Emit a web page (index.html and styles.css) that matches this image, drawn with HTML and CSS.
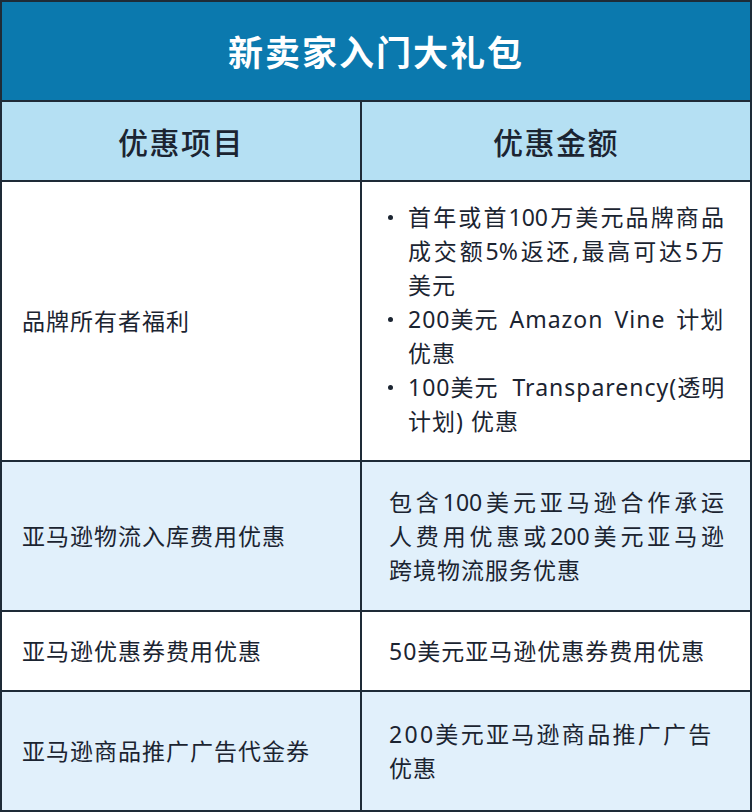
FILE: index.html
```html
<!DOCTYPE html>
<html lang="zh-CN">
<head>
<meta charset="utf-8">
<title>新卖家入门大礼包</title>
<link rel="stylesheet" href="styles.css">
</head>
<body>
<div class="card">
  <div class="title">新卖家入门大礼包</div>
  <div class="th">优惠项目</div>
  <div class="th">优惠金额</div>

  <div class="td left white">品牌所有者福利</div>
  <div class="td right white lift">
    <ul class="bullets">
      <li><span class="jl">首年或首100万美元品牌商品</span><span class="jl">成交额5%返还,最高可达5万</span><span class="ln">美元</span></li>
      <li><span class="ln spaced">200美元 Amazon Vine 计划</span><span class="ln">优惠</span></li>
      <li><span class="ln spaced2">100美元 Transparency(透明</span><span class="ln">计划) 优惠</span></li>
    </ul>
  </div>

  <div class="td left blue">亚马逊物流入库费用优惠</div>
  <div class="td right blue">
    <p class="para"><span class="jl">包含100美元亚马逊合作承运</span><span class="jl">人费用优惠或200美元亚马逊</span><span class="ln">跨境物流服务优惠</span></p>
  </div>

  <div class="td left white">亚马逊优惠券费用优惠</div>
  <div class="td right white">
    <p class="para"><span class="ln">50美元亚马逊优惠券费用优惠</span></p>
  </div>

  <div class="td left blue">亚马逊商品推广广告代金券</div>
  <div class="td right blue">
    <p class="para"><span class="ln wide">200美元亚马逊商品推广广告</span><span class="ln">优惠</span></p>
  </div>
</div>
</body>
</html>
```

FILE: styles.css
```css
html, body {
  margin: 0;
  padding: 0;
  background: #ffffff;
}

body {
  font-family: "Noto Sans", "Noto Sans CJK SC", sans-serif;
  color: #1b2431;
}

.card {
  width: 752px;
  height: 812px;
  box-sizing: border-box;
  display: grid;
  grid-template-columns: 358px 388px;
  grid-template-rows: 98px 78px 278px 148px 78px 118px;
  gap: 2px;
  padding: 2px;
  background: #1e2b37;
}

.title {
  grid-column: 1 / 3;
  background: #0b79ae;
  color: #ffffff;
  font-size: 35px;
  font-weight: 700;
  letter-spacing: 2px;
  display: flex;
  align-items: center;
  justify-content: center;
  padding-bottom: 2px;
}

.th {
  background: #b5e0f3;
  font-size: 30px;
  font-weight: 500;
  letter-spacing: 1.5px;
  display: flex;
  align-items: center;
  justify-content: center;
}

.td {
  display: flex;
  align-items: center;
  font-size: 23px;
  line-height: 34px;
  letter-spacing: 1px;
}

.white {
  background: #ffffff;
}

.blue {
  background: #e1f0fb;
}

.left {
  padding-left: 20px;
}

.right {
  padding-left: 27px;
  padding-right: 26px;
}

.lift {
  padding-bottom: 4px;
}

.bullets {
  list-style: none;
  margin: 0;
  padding: 0;
  width: 100%;
}

.bullets li {
  position: relative;
  padding-left: 19px;
}

.bullets li::before {
  content: "";
  position: absolute;
  left: -1px;
  top: 15px;
  width: 5px;
  height: 5px;
  border-radius: 50%;
  background: #1b2431;
}

.para {
  margin: 0;
  width: 100%;
}

.jl {
  display: block;
  letter-spacing: 0;
  text-align: justify;
  text-align-last: justify;
}

.ln {
  display: block;
  white-space: nowrap;
}

.spaced {
  word-spacing: 4px;
}

.spaced2 {
  word-spacing: 7px;
}

.wide {
  letter-spacing: 2.3px;
}
```
